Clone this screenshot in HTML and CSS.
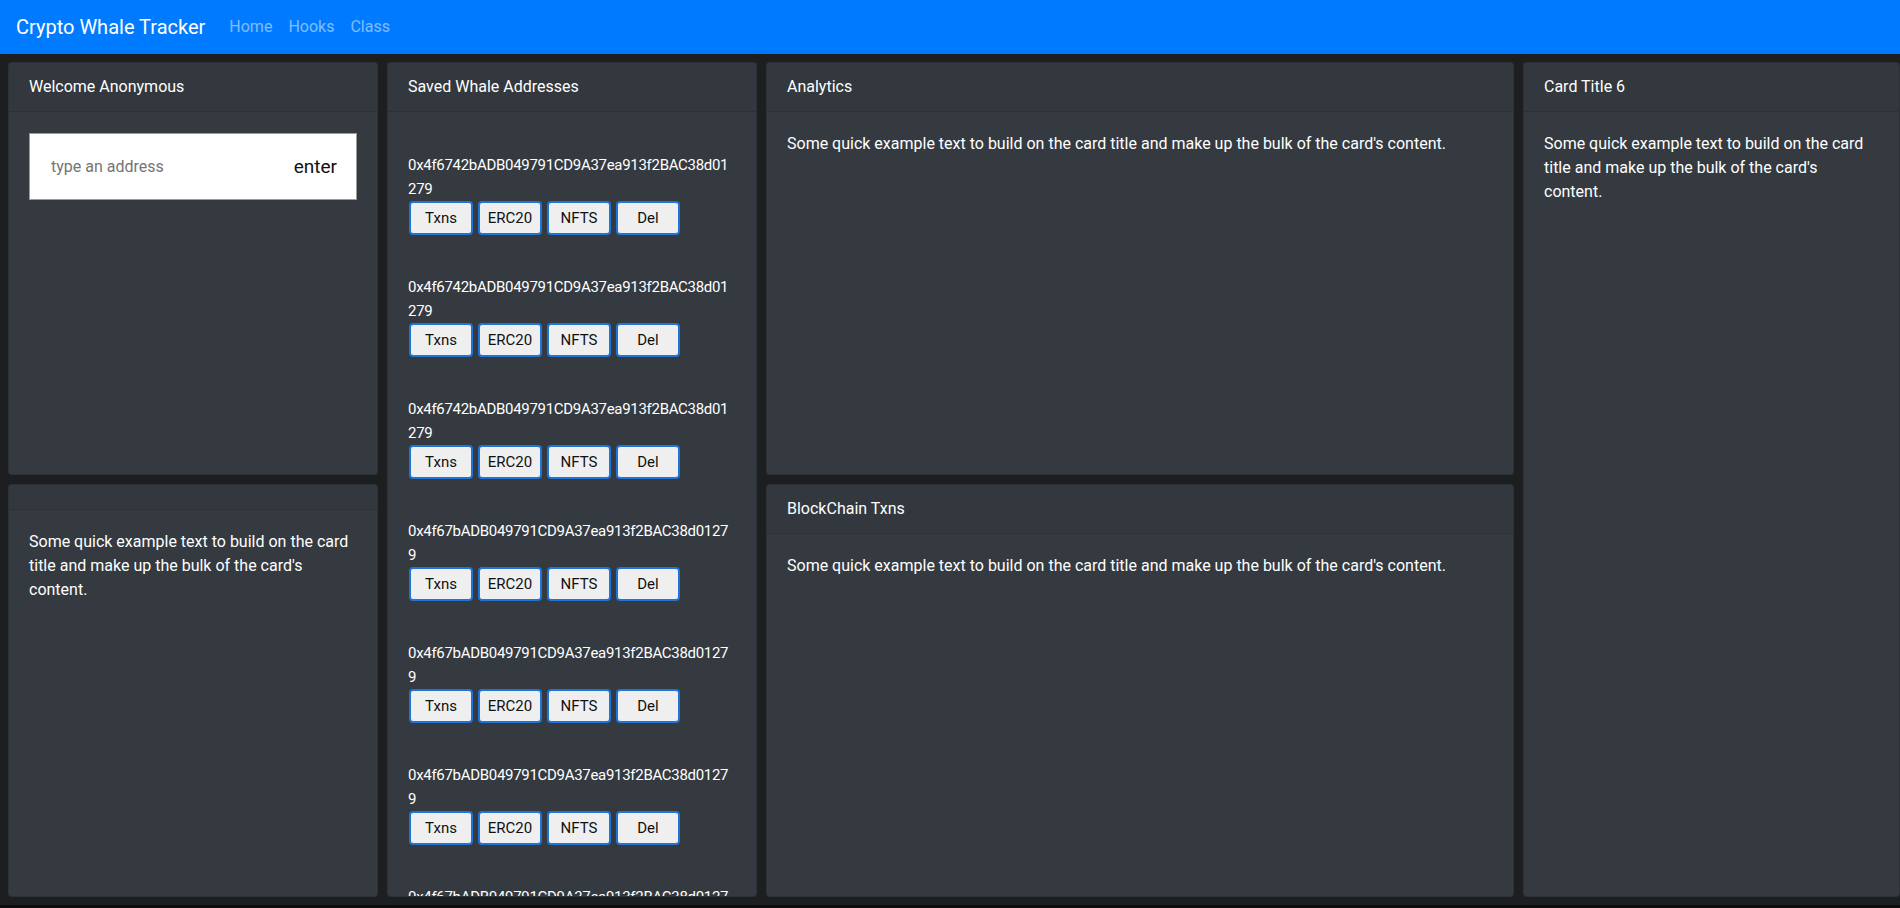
FILE: index.html
```html
<!DOCTYPE html>
<html lang="en">
<head>
<meta charset="utf-8">
<title>Crypto Whale Tracker</title>
<link rel="stylesheet" href="styles.css">
</head>
<body>
<nav class="navbar">
  <a class="brand" href="#">Crypto Whale Tracker</a>
  <div class="nav-links">
    <a class="nav-link" href="#">Home</a>
    <a class="nav-link" href="#">Hooks</a>
    <a class="nav-link" href="#">Class</a>
  </div>
</nav>
<main class="board">
  <section class="card c-welcome">
    <div class="card-header">Welcome Anonymous</div>
    <div class="card-body">
      <form class="addr-form">
        <input class="addr-input" type="text" placeholder="type an address">
        <button class="addr-enter" type="button">enter</button>
      </form>
    </div>
  </section>

  <section class="card c-empty">
    <div class="card-header"></div>
    <div class="card-body">
      <p class="card-text">Some quick example text to build on the card title and make up the bulk of the card's content.</p>
    </div>
  </section>

  <section class="card c-saved">
    <div class="card-header">Saved Whale Addresses</div>
    <div class="card-body">
      <div class="whale">
        <div class="whale-addr">0x4f6742bADB049791CD9A37ea913f2BAC38d01279</div>
        <div class="whale-actions"><button class="wbtn">Txns</button><button class="wbtn">ERC20</button><button class="wbtn">NFTS</button><button class="wbtn">Del</button></div>
      </div>
      <div class="whale">
        <div class="whale-addr">0x4f6742bADB049791CD9A37ea913f2BAC38d01279</div>
        <div class="whale-actions"><button class="wbtn">Txns</button><button class="wbtn">ERC20</button><button class="wbtn">NFTS</button><button class="wbtn">Del</button></div>
      </div>
      <div class="whale">
        <div class="whale-addr">0x4f6742bADB049791CD9A37ea913f2BAC38d01279</div>
        <div class="whale-actions"><button class="wbtn">Txns</button><button class="wbtn">ERC20</button><button class="wbtn">NFTS</button><button class="wbtn">Del</button></div>
      </div>
      <div class="whale">
        <div class="whale-addr">0x4f67bADB049791CD9A37ea913f2BAC38d01279</div>
        <div class="whale-actions"><button class="wbtn">Txns</button><button class="wbtn">ERC20</button><button class="wbtn">NFTS</button><button class="wbtn">Del</button></div>
      </div>
      <div class="whale">
        <div class="whale-addr">0x4f67bADB049791CD9A37ea913f2BAC38d01279</div>
        <div class="whale-actions"><button class="wbtn">Txns</button><button class="wbtn">ERC20</button><button class="wbtn">NFTS</button><button class="wbtn">Del</button></div>
      </div>
      <div class="whale">
        <div class="whale-addr">0x4f67bADB049791CD9A37ea913f2BAC38d01279</div>
        <div class="whale-actions"><button class="wbtn">Txns</button><button class="wbtn">ERC20</button><button class="wbtn">NFTS</button><button class="wbtn">Del</button></div>
      </div>
      <div class="whale">
        <div class="whale-addr">0x4f67bADB049791CD9A37ea913f2BAC38d01279</div>
        <div class="whale-actions"><button class="wbtn">Txns</button><button class="wbtn">ERC20</button><button class="wbtn">NFTS</button><button class="wbtn">Del</button></div>
      </div>
    </div>
  </section>

  <section class="card c-analytics">
    <div class="card-header">Analytics</div>
    <div class="card-body">
      <p class="card-text">Some quick example text to build on the card title and make up the bulk of the card's content.</p>
    </div>
  </section>

  <section class="card c-txns">
    <div class="card-header">BlockChain Txns</div>
    <div class="card-body">
      <p class="card-text">Some quick example text to build on the card title and make up the bulk of the card's content.</p>
    </div>
  </section>

  <section class="card c-six">
    <div class="card-header">Card Title 6</div>
    <div class="card-body">
      <p class="card-text">Some quick example text to build on the card title and make up the bulk of the card's content.</p>
    </div>
  </section>
</main>
</body>
</html>
```
FILE: styles.css
```css
* { box-sizing: border-box; }

html {
  background: #0d0d0d;
  overflow: hidden;
}

body {
  margin: 0;
  height: 905px;
  background: #1d1e20;
  color: #fff;
  font-family: Roboto, "Noto Sans", sans-serif;
  font-size: 16px;
  line-height: 24px;
  overflow: hidden;
}

.navbar {
  height: 54px;
  background: #007bff;
  display: flex;
  align-items: center;
  padding: 0 16px;
}

.brand {
  color: #fff;
  font-size: 20px;
  line-height: 30px;
  text-decoration: none;
  margin-right: 16px;
}

.nav-links {
  display: flex;
}

.nav-link {
  color: rgba(255, 255, 255, 0.5);
  text-decoration: none;
  padding: 0 8px;
}

.board {
  display: grid;
  grid-template-columns: 370px 370px 748px 1fr;
  grid-template-rows: 413px 413px;
  gap: 9px;
  padding: 8px 0 0 8px;
}

.card {
  background: #343a40;
  border: 1px solid rgba(0, 0, 0, 0.125);
  border-radius: 4px;
  display: flex;
  flex-direction: column;
  overflow: hidden;
  min-width: 0;
}

.card-header {
  background: rgba(0, 0, 0, 0.03);
  border-bottom: 1px solid rgba(0, 0, 0, 0.125);
  padding: 12px 20px;
  min-height: 25px;
}

.card-body {
  padding: 20px;
  flex: 1;
  min-height: 0;
}

.card-text { margin: 0; }

.c-welcome { grid-column: 1; grid-row: 1; }
.c-empty { grid-column: 1; grid-row: 2; }
.c-saved { grid-column: 2; grid-row: 1 / span 2; }
.c-analytics { grid-column: 3; grid-row: 1; }
.c-txns { grid-column: 3; grid-row: 2; }
.c-six { grid-column: 4; grid-row: 1 / span 2; }

.addr-form {
  display: flex;
  align-items: center;
  height: 67px;
  background: #fff;
  border: 1px solid #9a9a9a;
  padding: 0 19px 0 21px;
  margin-top: 1px;
}

.addr-input {
  flex: 1;
  min-width: 0;
  border: 0;
  outline: 0;
  font: inherit;
  color: #212529;
  background: transparent;
  padding: 0;
}

.addr-input::placeholder { color: #757575; }

.addr-enter {
  border: 0;
  background: transparent;
  font-family: inherit;
  font-size: 19px;
  color: #111;
  padding: 0;
}

.whale {
  padding: 21px 0 19px;
}

.whale-addr {
  word-break: break-all;
  font-size: 15px;
  letter-spacing: -0.3px;
  max-width: 324px;
}

.whale-actions {
  display: flex;
  gap: 5px;
  padding-left: 1px;
}

.wbtn {
  width: 64px;
  height: 34px;
  background: #efefef;
  border: 2px solid #1f74d8;
  border-radius: 4px;
  font-family: inherit;
  font-size: 15px;
  color: #111;
  padding: 0;
}
```
